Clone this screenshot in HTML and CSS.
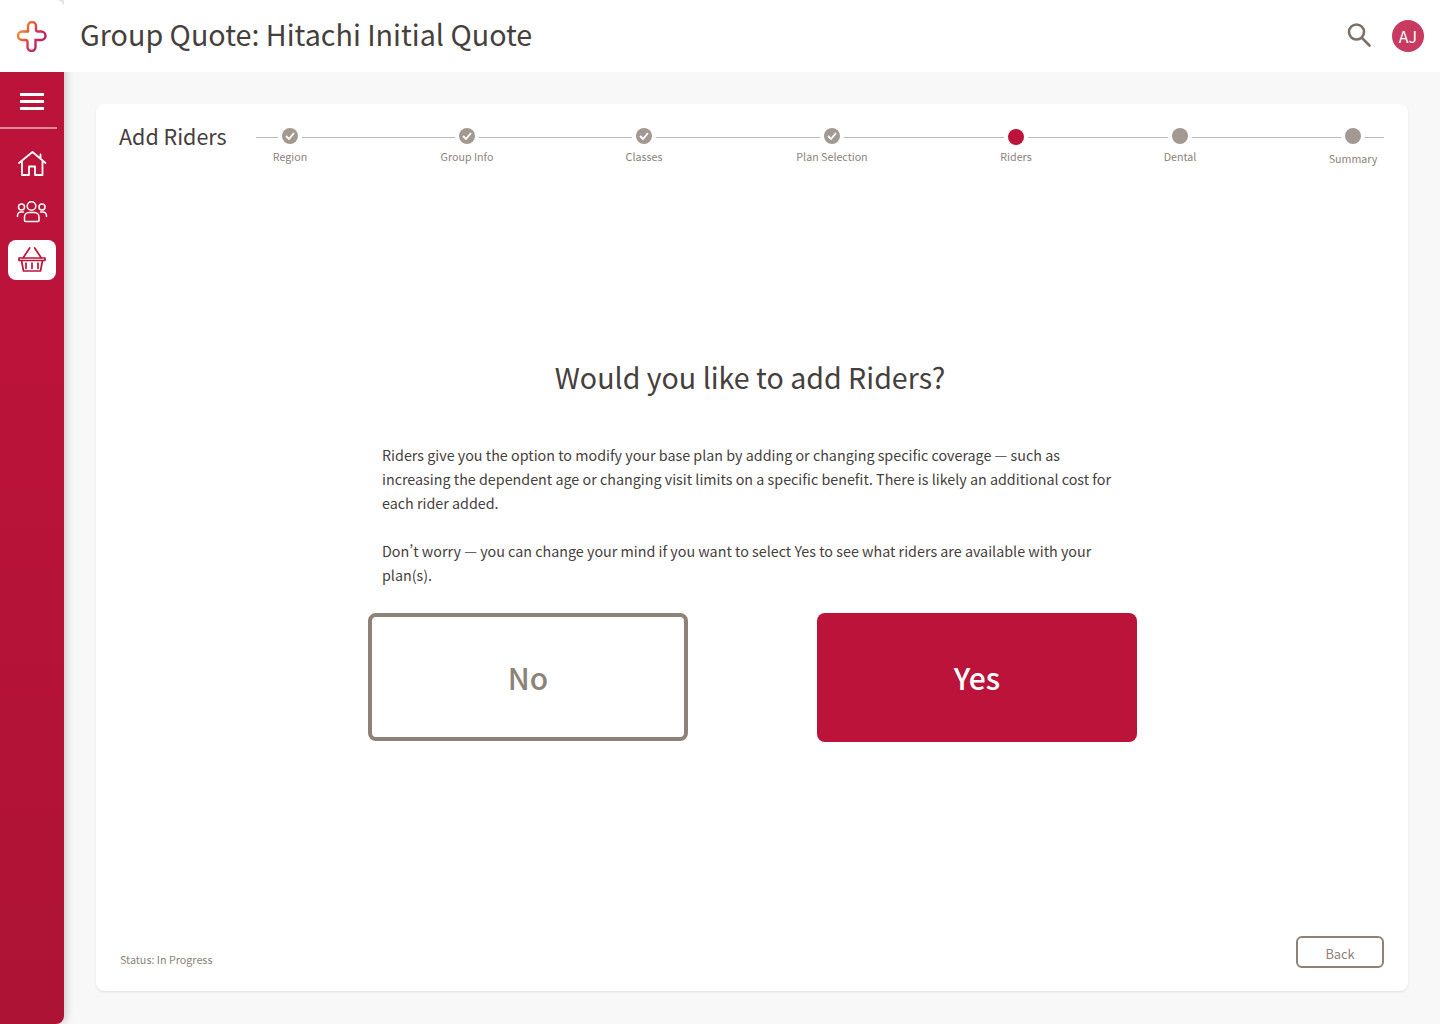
FILE: index.html
```html
<!DOCTYPE html>
<html lang="en">
<head>
  <meta charset="UTF-8" />
  <title>Group Quote: Hitachi Initial Quote</title>
  <link rel="stylesheet" href="styles.css">
</head>
<body>
  <aside class="sidebar">
    <div class="logo">
      <svg width="30" height="31" viewBox="0 0 30 31" fill="none">
        <defs>
          <linearGradient id="logoGrad" gradientUnits="userSpaceOnUse" x1="1" y1="10" x2="28" y2="26">
            <stop offset="0" stop-color="#f7932b"/>
            <stop offset="0.5" stop-color="#dc3350"/>
            <stop offset="1" stop-color="#a5176f"/>
          </linearGradient>
        </defs>
        <path d="M11 10.500V5a4 4 0 0 1 8 0v3.500a2 2 0 0 0 2 2h3.250a4.250 4.250 0 0 1 0 8.500H18.500v7a4 4 0 0 1-8 0v-5a2 2 0 0 0-2-2H5.250a4.250 4.250 0 0 1 0-8.500H11" stroke="url(#logoGrad)" stroke-width="2.400" stroke-linecap="round"/>
      </svg>
    </div>
    <div class="sidebar-body">
      <div class="menu">
        <button class="burger"><span></span><span></span><span></span></button>
      </div>
      <nav class="nav">
        <a class="nav-item" href="#">
          <svg width="30" height="30" viewBox="-0.500 0 30 30" fill="none" stroke="#fff" stroke-width="1.800" stroke-linejoin="round" stroke-linecap="round">
            <path d="M1.500 14 15 3l13 11M4.500 12v14H11.500v-8.500h6V26H25V12M23 9V5.500"/>
          </svg>
        </a>
        <a class="nav-item" href="#">
          <svg width="32" height="30" viewBox="-0.500 0 32 30" fill="none" stroke="#fff" stroke-width="1.500" stroke-linecap="round" stroke-linejoin="round">
            <circle cx="15" cy="9" r="4.300"/>
            <circle cx="5" cy="10" r="3"/>
            <circle cx="25.500" cy="10" r="3"/>
            <path d="M8 23.500v-3.500a4.500 4.500 0 0 1 4.500-4.500h5.500a4.500 4.500 0 0 1 4.500 4.500v3.500a1 1 0 0 1-1 1H9a1 1 0 0 1-1-1z"/>
            <path d="M1 19.500v-1a3.500 3.500 0 0 1 3.500-3.500H7M30 19.500v-1a3.500 3.500 0 0 0-3.500-3.500H24"/>
          </svg>
        </a>
        <a class="nav-item nav-active" href="#">
          <svg width="32" height="28" viewBox="0 0 32 28" fill="none" stroke="#bb133a" stroke-width="1.700" stroke-linecap="round" stroke-linejoin="round">
            <path d="M3 12h26v2.500H3zM5.500 14.500l2 10.500h17l2-10.500M7 12l6.700-10M25.300 12l-6.600-10M10 17v5.500M16 17v5.500M22 17v5.500"/>
          </svg>
        </a>
      </nav>
    </div>
  </aside>

  <div class="main">
    <header class="topbar">
      <h1>Group Quote: Hitachi Initial Quote</h1>
      <div class="topbar-right">
        <svg width="28" height="28" viewBox="0 0 28 28" fill="none" stroke="#7b7168" stroke-width="2.600" stroke-linecap="round">
          <circle cx="10.500" cy="10" r="7.500"/>
          <path d="M16 16l7.500 7.500"/>
        </svg>
        <span class="avatar">AJ</span>
      </div>
    </header>

    <section class="card">
      <div class="card-head">
        <h2>Add Riders</h2>
        <ol class="steps">
          <li class="step"><span class="dot"><svg width="10" height="8" viewBox="0 0 10 8" fill="none" stroke="#fff" stroke-width="1.800"><path d="M1 4l3 3 5-6"/></svg></span><span class="step-label">Region</span></li>
          <li class="step"><span class="dot"><svg width="10" height="8" viewBox="0 0 10 8" fill="none" stroke="#fff" stroke-width="1.800"><path d="M1 4l3 3 5-6"/></svg></span><span class="step-label">Group Info</span></li>
          <li class="step"><span class="dot"><svg width="10" height="8" viewBox="0 0 10 8" fill="none" stroke="#fff" stroke-width="1.800"><path d="M1 4l3 3 5-6"/></svg></span><span class="step-label">Classes</span></li>
          <li class="step"><span class="dot"><svg width="10" height="8" viewBox="0 0 10 8" fill="none" stroke="#fff" stroke-width="1.800"><path d="M1 4l3 3 5-6"/></svg></span><span class="step-label">Plan Selection</span></li>
          <li class="step step-current"><span class="dot"></span><span class="step-label">Riders</span></li>
          <li class="step"><span class="dot"></span><span class="step-label">Dental</span></li>
          <li class="step step-last"><span class="dot"></span><span class="step-label">Summary</span></li>
        </ol>
      </div>

      <div class="question">
        <h3>Would you like to add Riders?</h3>
        <div class="copy">
          <p>Riders give you the option to modify your base plan by adding or changing specific coverage — such as increasing the dependent age or changing visit limits on a specific benefit. There is likely an additional cost for each rider added.</p>
          <p>Don’t worry — you can change your mind if you want to select Yes to see what riders are available with your plan(s).</p>
        </div>
        <div class="choices">
          <button class="choice choice-no">No</button>
          <button class="choice choice-yes">Yes</button>
        </div>
      </div>

      <div class="card-foot">
        <span class="status">Status: In Progress</span>
        <button class="back">Back</button>
      </div>
    </section>
  </div>
</body>
</html>
```

FILE: styles.css
```css
* { box-sizing: border-box; }
html, body { height: 100%; }
body {
  margin: 0;
  height: 1024px;
  overflow: hidden;
  display: flex;
  background: #f8f8f8;
  color: #45403c;
  font-family: "Noto Sans CJK SC", "Open Sans", sans-serif;
  font-variant-east-asian: proportional-width;
}

/* sidebar */
.sidebar {
  width: 64px;
  flex-shrink: 0;
  display: flex;
  flex-direction: column;
  border-radius: 0 8px 8px 0;
  box-shadow: 2px 0 8px rgba(0, 0, 0, 0.2);
}
.logo { height: 72px; background: #fff; border-radius: 0 8px 0 0; display: flex; align-items: center; justify-content: center; }
.sidebar-body { flex: 1; background: linear-gradient(#bb133a, #bb133a 30%, #ad1335); border-radius: 0 0 8px 0; }
.menu { height: 57px; margin-right: 7px; border-bottom: 2px solid #dc8a9d; display: flex; align-items: center; justify-content: center; padding: 3px 0 0 7px; }
.burger { width: 24px; padding: 0; background: none; border: 0; display: flex; flex-direction: column; gap: 4px; }
.burger span { height: 3px; background: #fff; }
.nav { display: flex; flex-direction: column; align-items: center; padding-top: 15px; gap: 8px; }
.nav-item { width: 48px; height: 40px; display: flex; align-items: center; justify-content: center; border-radius: 8px; }
.nav-active { background: #fff; }

/* top bar */
.main { flex: 1; display: flex; flex-direction: column; min-width: 0; }
.topbar { height: 72px; background: #fff; display: flex; align-items: center; justify-content: space-between; padding: 0 16px; }
.topbar h1 { margin: 0 0 6px; font-size: 28.700px; font-weight: 400; color: #45403c; }
.topbar-right { display: flex; align-items: center; gap: 18px; }
.avatar { width: 32px; height: 32px; border-radius: 50%; background: #c93a60; color: #fff; font-size: 16px; display: flex; align-items: center; justify-content: center; }

/* card */
.card {
  margin: 32px;
  height: 887px;
  background: #fff;
  border-radius: 8px;
  box-shadow: 0 1px 2px rgba(0, 0, 0, 0.1);
  display: flex;
  flex-direction: column;
}
.card-head { display: flex; align-items: flex-start; padding: 16px 24px 0 23px; }
.card-head h2 { margin: 0; width: 137px; font-size: 21.500px; font-weight: 400; line-height: 32px; flex-shrink: 0; }

/* stepper */
.steps {
  list-style: none;
  margin: 0;
  padding: 0;
  flex: 1;
  position: relative;
  display: grid;
  grid-template-columns: 177px 177px 188px 184px 164px 173px 65px;
}
.steps::before { content: ""; position: absolute; top: 17px; left: 0; right: 0; height: 1px; background: #bdb8b3; }
.step { width: 68px; display: flex; flex-direction: column; align-items: center; position: relative; padding-top: 8px; white-space: nowrap; }
.dot { position: relative; width: 16px; height: 16px; border-radius: 50%; background: #a29a92; display: flex; align-items: center; justify-content: center; box-shadow: 0 0 0 4px #fff; }
.step-current .dot { background: #bb133a; margin-top: 1px; margin-bottom: -1px; }
.step-label { margin-top: 5px; font-size: 10.700px; color: #8c8279; }
.step-last .step-label { margin-top: 7px; }

/* question */
.question { width: 770px; margin: 190px auto 0; display: flex; flex-direction: column; }
.question h3 { margin: 0 0 46px; padding-right: 4px; text-align: center; font-size: 28.600px; font-weight: 400; color: #45403c; }
.copy { padding: 0 17px 0 15px; font-size: 14.320px; line-height: 24px; color: #45403c; }
.copy p { margin: 0 0 24px; }
.choices { display: flex; justify-content: space-between; align-items: flex-start; padding: 2px 0 0 1px; }
.choice { width: 320px; height: 128px; border-radius: 8px; font-family: inherit; font-size: 30px; font-weight: 500; }
.choice-no { background: #fff; border: 4px solid #8e8278; color: #8e8278; }
.choice-yes { height: 129px; padding-bottom: 3px; background: #bb133a; border: 0; color: #fff; }

/* footer */
.card-foot { margin-top: auto; display: flex; justify-content: space-between; align-items: flex-start; padding: 0 24px 23px; }
.status { font-size: 10.750px; color: #8c8279; padding-top: 16px; }
.back { width: 88px; height: 32px; padding: 2px 0 0; background: #fff; border: 2px solid #8e8278; border-radius: 6px; font-family: inherit; font-size: 12.800px; color: #8e8278; }
```
